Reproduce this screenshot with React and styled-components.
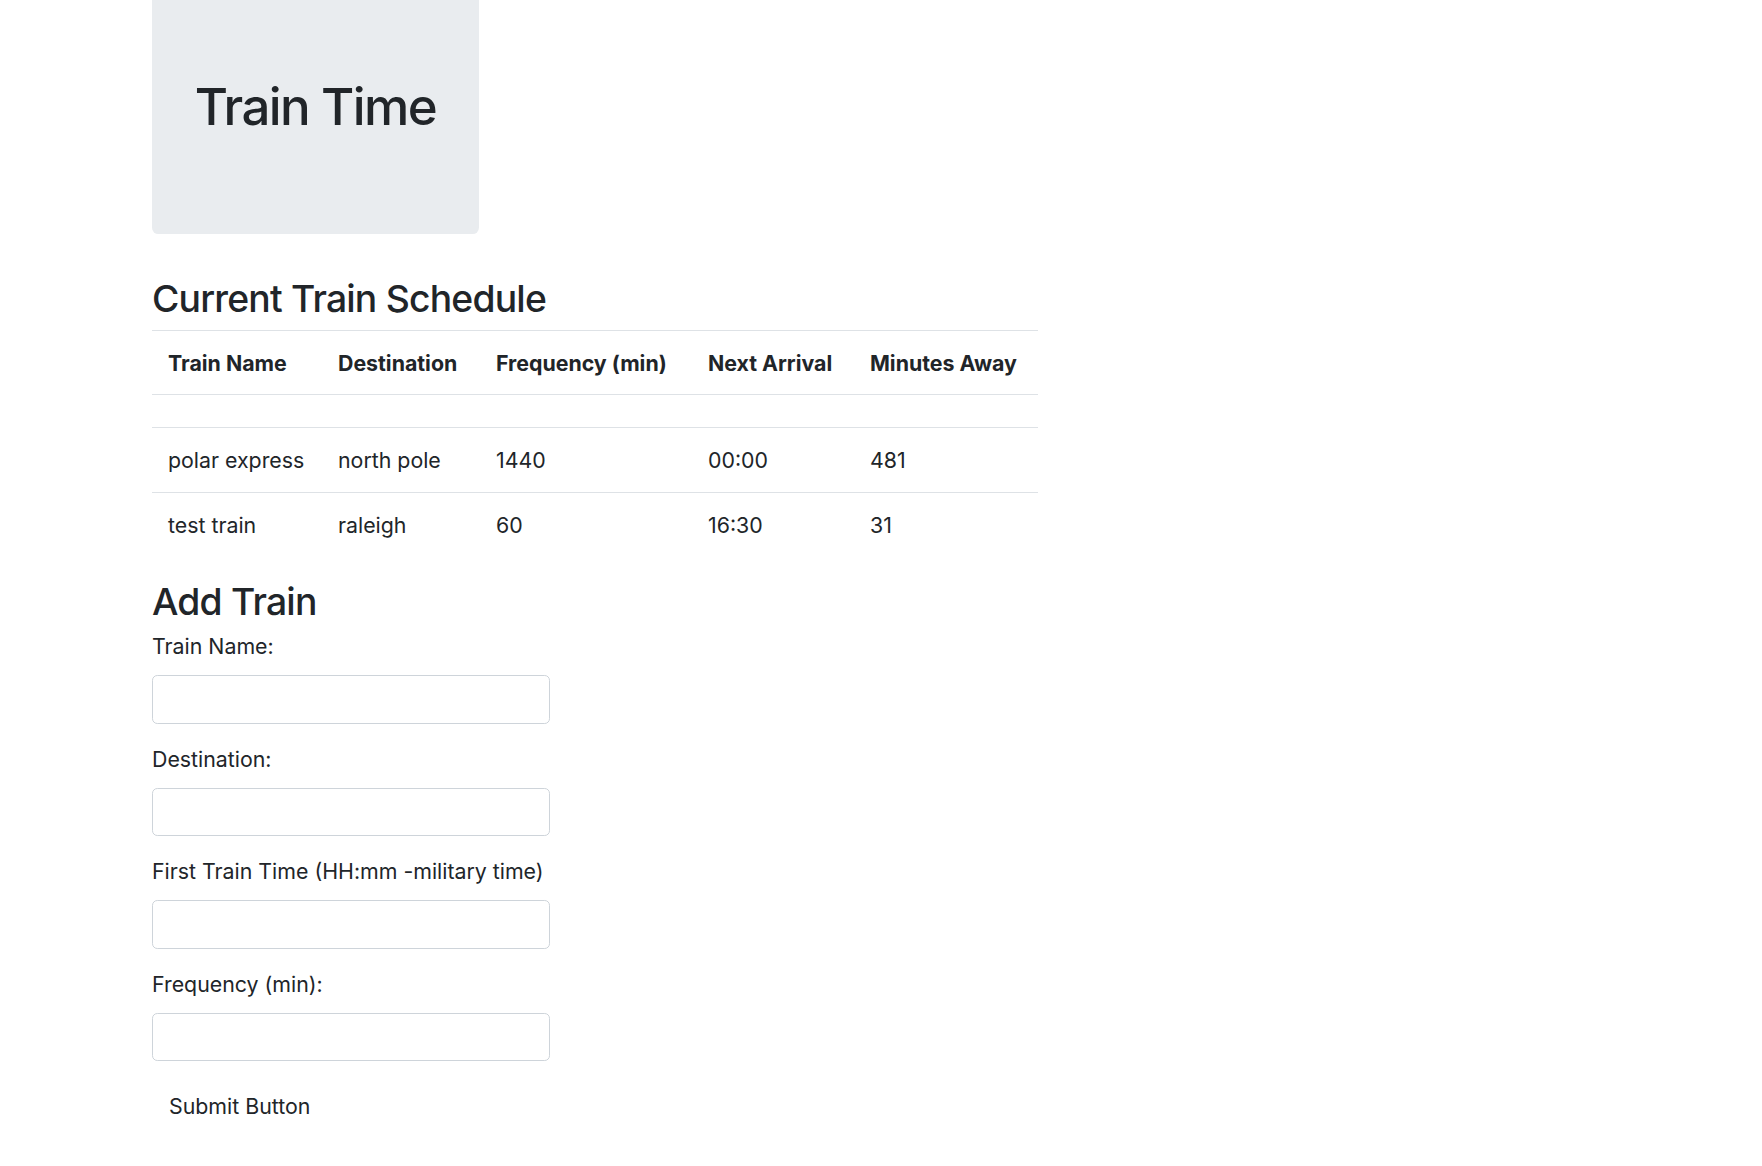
import React from 'react';
import styled, { createGlobalStyle } from 'styled-components';

const GlobalStyle = createGlobalStyle`
  body {
    margin: 0;
    background: #fff;
    color: #212529;
    font-family: Inter, "Noto Sans", "Liberation Sans", sans-serif;
    font-size: 21.33px;
    line-height: 32px;
  }
`;

const Page = styled.div`
  padding-left: 152px;
  width: 886px;
`;

const Jumbotron = styled.header`
  width: fit-content;
  background: #e9ecef;
  border-radius: 0 0 6.4px 6.4px;
  padding: 74.5px 42.7px 85.3px;
  margin-bottom: 42.7px;
`;

const Title = styled.h1`
  margin: 0 0 10.7px;
  font-size: 51px;
  line-height: 64px;
  font-weight: 500;
  letter-spacing: -1.6px;
`;

const SectionTitle = styled.h3`
  margin: 0 0 ${(p) => p.gap}px;
  font-size: 37.3px;
  line-height: 44.8px;
  font-weight: 500;
  letter-spacing: -0.8px;
`;

const Table = styled.table`
  width: 886px;
  border-collapse: collapse;
  margin-bottom: 22.3px;
  table-layout: fixed;
`;

const Th = styled.th`
  text-align: left;
  font-weight: 700;
  padding: 15.5px 16px;
  border-top: 1px solid #dee2e6;
  border-bottom: 1px solid #dee2e6;
  white-space: nowrap;
`;

const Td = styled.td`
  padding: 16px;
  border-top: 1px solid #dee2e6;
  white-space: nowrap;
`;

const FieldGroup = styled.div`
  margin-bottom: 21.3px;
`;

const Label = styled.label`
  display: block;
  line-height: 29px;
  margin-bottom: 13.7px;
`;

const Input = styled.input`
  display: block;
  box-sizing: border-box;
  width: 398px;
  height: 48.5px;
  border: 1px solid #ced4da;
  border-radius: 5.3px;
  padding: 8px 16px;
  font: inherit;
  color: #495057;
`;

const SubmitButton = styled.button`
  border: 1px solid transparent;
  background: transparent;
  padding: 6.5px 16px;
  font: inherit;
  color: #212529;
  cursor: pointer;
`;

const columns = [
  { label: 'Train Name', width: 170 },
  { label: 'Destination', width: 158 },
  { label: 'Frequency (min)', width: 212 },
  { label: 'Next Arrival', width: 162 },
  { label: 'Minutes Away', width: 184 },
];

const trains = [
  ['polar express', 'north pole', '1440', '00:00', '481'],
  ['test train', 'raleigh', '60', '16:30', '31'],
];

const fields = [
  'Train Name:',
  'Destination:',
  'First Train Time (HH:mm -military time)',
  'Frequency (min):',
];

export default function App() {
  return (
    <>
      <GlobalStyle />
      <Page>
        <Jumbotron>
          <Title>Train Time</Title>
        </Jumbotron>

        <SectionTitle gap={8.5}>Current Train Schedule</SectionTitle>
        <Table>
          <colgroup>
            {columns.map((c) => (
              <col key={c.label} style={{ width: c.width }} />
            ))}
          </colgroup>
          <thead>
            <tr>
              {columns.map((c) => (
                <Th key={c.label}>{c.label}</Th>
              ))}
            </tr>
          </thead>
          <tbody>
            <tr>
              <Td colSpan={5} />
            </tr>
            {trains.map((row) => (
              <tr key={row[0]}>
                {row.map((cell, i) => (
                  <Td key={i}>{cell}</Td>
                ))}
              </tr>
            ))}
          </tbody>
        </Table>

        <SectionTitle gap={7.8}>Add Train</SectionTitle>
        <form onSubmit={(e) => e.preventDefault()}>
          {fields.map((f) => (
            <FieldGroup key={f}>
              <Label>{f}</Label>
              <Input type="text" />
            </FieldGroup>
          ))}
          <SubmitButton type="submit">Submit Button</SubmitButton>
        </form>
      </Page>
    </>
  );
}
